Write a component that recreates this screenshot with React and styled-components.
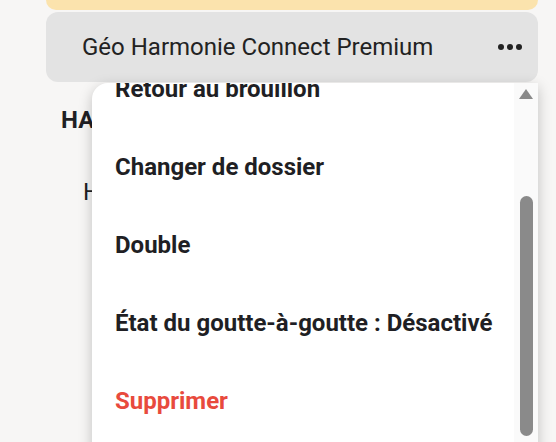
import React, { useEffect, useRef } from 'react'
import styled, { createGlobalStyle } from 'styled-components'

const GlobalStyle = createGlobalStyle`
  html, body {
    margin: 0;
    height: 100%;
    overflow: hidden;
    background: #f7f6f5;
    font-family: Roboto, "Noto Sans", "Liberation Sans", sans-serif;
    color: #1f1f24;
  }
`

const Page = styled.div`
  position: relative;
  height: 442px;
  padding: 0 18px 0 46px;
  display: flex;
  flex-direction: column;
  gap: 2px;
`

const Banner = styled.div`
  height: 10px;
  background: #fbe3ad;
  border-radius: 0 0 12px 12px;
`

const FolderRow = styled.div`
  height: 70px;
  display: flex;
  align-items: center;
  justify-content: space-between;
  padding: 0 16px 0 36px;
  background: #e3e3e3;
  border-radius: 12px;
  font-size: 24px;
  color: #222;
`

const Dots = styled.span`
  display: flex;
  gap: 3px;
  span {
    width: 6px;
    height: 6px;
    border-radius: 50%;
    background: #222;
  }
`

const Section = styled.div`
  display: flex;
  flex-direction: column;
  padding: 22px 0 0 15px;
  gap: 44px;
`

const SectionTitle = styled.h3`
  margin: 0;
  font-size: 24px;
  font-weight: 700;
`

const SectionItem = styled.div`
  padding-left: 22px;
  font-size: 24px;
`

const Menu = styled.div`
  position: absolute;
  top: 83px;
  left: 92px;
  right: 18px;
  height: 380px;
  display: flex;
  background: #fff;
  border-radius: 16px 0 0 0;
  box-shadow: 0 4px 14px rgba(0, 0, 0, 0.22);
`

const Viewport = styled.div`
  flex: 1;
  overflow: hidden;
  padding-bottom: 40px;
`

const Item = styled.div`
  height: 78px;
  display: flex;
  align-items: center;
  padding-left: 23px;
  font-size: 24px;
  font-weight: 700;
  color: ${p => (p.$danger ? '#e84a3d' : '#1f1f24')};
  white-space: nowrap;
`

const Rail = styled.div`
  width: 24px;
  display: flex;
  flex-direction: column;
  align-items: center;
  background: #fafafa;
  padding-top: 6px;
`

const ArrowUp = styled.div`
  width: 0;
  height: 0;
  border-left: 7px solid transparent;
  border-right: 7px solid transparent;
  border-bottom: 10px solid #8a8a8a;
`

const Thumb = styled.div`
  margin-top: 97px;
  width: 13px;
  height: 240px;
  border-radius: 7px;
  background: #8a8a8a;
`

const items = [
  { label: 'Retour au brouillon' },
  { label: 'Changer de dossier' },
  { label: 'Double' },
  { label: 'État du goutte-à-goutte : Désactivé' },
  { label: 'Supprimer', danger: true },
]

export default function App() {
  const viewport = useRef(null)

  useEffect(() => {
    if (viewport.current) viewport.current.scrollTop = 33
  }, [])

  return (
    <>
      <GlobalStyle />
      <Page>
        <Banner />
        <FolderRow>
          Géo Harmonie Connect Premium
          <Dots>
            <span />
            <span />
            <span />
          </Dots>
        </FolderRow>
        <Section>
          <SectionTitle>HA</SectionTitle>
          <SectionItem>H</SectionItem>
        </Section>
        <Menu>
          <Viewport ref={viewport}>
            {items.map(item => (
              <Item key={item.label} $danger={item.danger}>
                {item.label}
              </Item>
            ))}
          </Viewport>
          <Rail>
            <ArrowUp />
            <Thumb />
          </Rail>
        </Menu>
      </Page>
    </>
  )
}
